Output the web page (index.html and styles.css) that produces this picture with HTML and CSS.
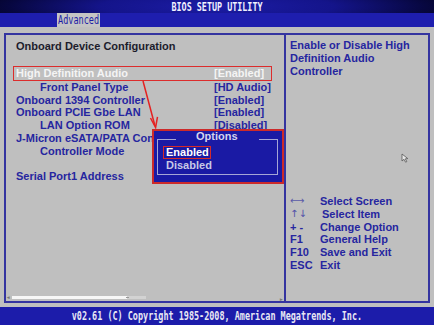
FILE: index.html
```html
<!DOCTYPE html>
<html lang="en">
<head>
<meta charset="UTF-8">
<link rel="stylesheet" href="styles.css">
</head>
<body>
<div class="screen">
  <div class="titlebar"><span class="mono title_text">BIOS SETUP UTILITY</span></div>
  <div class="tabs">
    <div class="tab"><span class="mono">Advanced</span></div>
  </div>

  <div class="main">
    <div class="frame">
      <div class="left">
        <div class="heading">Onboard Device Configuration</div>
        <div class="rows">
          <div class="row selected"><span class="label">High Definition Audio</span><span class="value">[Enabled]</span></div>
          <div class="row"><span class="label sub">Front Panel Type</span><span class="value">[HD Audio]</span></div>
          <div class="row"><span class="label">Onboard 1394 Controller</span><span class="value">[Enabled]</span></div>
          <div class="row"><span class="label">Onboard PCIE Gbe LAN</span><span class="value">[Enabled]</span></div>
          <div class="row"><span class="label sub">LAN Option ROM</span><span class="value">[Disabled]</span></div>
          <div class="row"><span class="label">J-Micron eSATA/PATA Controller</span></div>
          <div class="row"><span class="label sub">Controller Mode</span></div>
          <div class="row blank">&nbsp;</div>
          <div class="row"><span class="label">Serial Port1 Address</span></div>
        </div>
        <div class="scrollbar">
          <span class="scroll_arrow">&#9666;</span>
          <div class="scroll_thumb"><span class="grip"></span></div>
          <span class="scroll_arrow right">&#9656;</span>
        </div>
      </div>

      <div class="right">
        <div class="help">Enable or Disable High<br>Definition Audio<br>Controller</div>
        <div class="keys">
          <span class="key arrows">&#10231;</span><span class="desc">Select Screen</span>
          <span class="key updown">&#8593;&#8595;</span><span class="desc shifted">Select Item</span>
          <span class="key">+ -</span><span class="desc">Change Option</span>
          <span class="key">F1</span><span class="desc">General Help</span>
          <span class="key">F10</span><span class="desc">Save and Exit</span>
          <span class="key">ESC</span><span class="desc">Exit</span>
        </div>
      </div>
    </div>
  </div>

  <div class="footer"><span class="mono">v02.61 (C) Copyright 1985-2008, American Megatrends, Inc.</span></div>

  <!-- overlays -->
  <div class="popup">
    <div class="options_title">Options</div>
    <div class="options_body">
      <div class="option current">Enabled</div>
      <div class="option">Disabled</div>
    </div>
  </div>

  <svg class="arrow" width="434" height="325" viewBox="0 0 434 325">
    <line x1="143" y1="81" x2="155" y2="126" stroke="#e42222" stroke-width="1.5"/>
    <path d="M150.5 118 L155.6 127.5 L157.5 116.8" fill="none" stroke="#e42222" stroke-width="1.5"/>
  </svg>

  <svg class="cursor" width="8" height="10" viewBox="0 0 8 10">
    <path d="M1 1 L1 8 L3 6.3 L4.6 9.2 L5.8 8.6 L4.3 5.8 L6.8 5.6 Z" fill="#e8e8e8" stroke="#555" stroke-width="0.8"/>
  </svg>
</div>
</body>
</html>
```

FILE: styles.css
```css
body {
  margin: 0;
  background: #bebebe;
}

.screen {
  position: relative;
  width: 434px;
  height: 325px;
  overflow: hidden;
  display: flex;
  flex-direction: column;
  font-family: "Liberation Sans", Arial, sans-serif;
  font-weight: bold;
  font-size: 11px;
  color: #2626a0;
}

/* bitmap-ish bios font */
.mono {
  display: inline-block;
  font-family: "DejaVu Sans Mono", monospace;
  font-size: 12px;
  transform: scaleX(0.7);
  white-space: nowrap;
}

.titlebar {
  height: 13px;
  line-height: 14px;
  text-align: center;
  color: #f0f0ff;
  background: radial-gradient(ellipse 60% 220% at 50% 50%, #1c1ca6 0%, #14148a 45%, #070740 80%, #03031c 100%);
}

.title_text {
  font-weight: bold;
}

.tabs {
  height: 14px;
  background: #1e1eae;
  padding-left: 57px;
}

.tab {
  width: 43px;
  height: 14px;
  line-height: 14px;
  background: #c4c4c4;
  color: #1e1ea6;
}

.tab .mono {
  font-weight: normal;
  margin-left: 1px;
  transform: scaleX(0.71);
  transform-origin: left center;
}

.main {
  height: 282px;
  box-sizing: border-box;
  padding: 6px 4px 4px 4px;
  background: #bfbfbf;
}

.frame {
  height: 100%;
  box-sizing: border-box;
  border: 2px solid #3434a0;
  display: flex;
}

.left {
  width: 278px;
  border-right: 2px solid #3434a0;
  display: flex;
  flex-direction: column;
}

.heading {
  padding: 5px 0 0 10px;
  line-height: 13px;
  color: #1c1c2c;
}

.rows {
  margin-top: 13px;
}

.row {
  display: flex;
  margin-left: 7px;
  width: 255px;
  padding-left: 2px;
  border-left: 1px solid transparent;
  border-right: 1px solid transparent;
  line-height: 12.7px;
  white-space: nowrap;
}

.row.selected {
  border: 1px solid #dc2c2c;
  line-height: 13px;
  color: #f4f4f4;
}

.label {
  width: 198px;
}

.label.sub {
  padding-left: 24px;
  box-sizing: border-box;
}

.scrollbar {
  margin-top: auto;
  margin-bottom: 2px;
  height: 4px;
  display: flex;
  align-items: center;
  padding: 0 1px;
  font-size: 5px;
  color: #777;
}

.scroll_arrow {
  width: 5px;
  line-height: 4px;
}

.scroll_arrow.right {
  text-align: right;
}

.scroll_thumb {
  flex: 1;
  height: 3px;
  background: linear-gradient(to right, #f6f6f6 0%, #f6f6f6 86%, #d2d2d2 86%, #d2d2d2 100%);
  position: relative;
}

.grip {
  position: absolute;
  left: 114px;
  top: 1px;
  width: 3px;
  height: 1px;
  background: #999;
}

.right {
  flex: 1;
  padding: 4px 0 0 4px;
}

.help {
  line-height: 13px;
}

.keys {
  margin-top: 117px;
  display: grid;
  grid-template-columns: 30px auto;
  line-height: 12.8px;
}

.key.arrows {
  font-family: "DejaVu Sans", sans-serif;
  font-weight: normal;
  font-size: 10px;
  color: #5a5aa8;
}

.key.updown {
  font-family: "DejaVu Sans", sans-serif;
  font-weight: normal;
  font-size: 10px;
  color: #5050a8;
}

.desc.shifted {
  padding-left: 2px;
}

.footer {
  flex: 1;
  background: #1c1caa;
  color: #e8e8f4;
  text-align: center;
  line-height: 18px;
}

.footer .mono {
  transform: scaleX(0.705);
}

.popup {
  position: absolute;
  left: 152px;
  top: 129px;
  width: 132px;
  height: 55px;
  box-sizing: border-box;
  border: 2px solid #cc2a2a;
  background: #1a1aa4;
  padding: 0 4px 0 3px;
}

.options_title {
  display: flex;
  line-height: 11px;
  color: #d4d4ee;
}

.options_title::before,
.options_title::after {
  content: "";
  width: 18px;
  height: 3px;
  margin-top: 8px;
  border-top: 1px solid #a6a6d6;
  border-left: 1px solid #a6a6d6;
}

.options_title::after {
  border-left: none;
  border-right: 1px solid #a6a6d6;
}

.options_title::before {
  margin-right: 20px;
}

.options_title::after {
  margin-left: auto;
}

.options_body {
  border: 1px solid #a6a6d6;
  border-top: none;
  height: 32px;
  box-sizing: border-box;
  padding-top: 3px;
}

.option {
  margin-left: 5px;
  padding-left: 2px;
  border: 1px solid transparent;
  line-height: 11px;
  color: #c8c8e6;
}

.option.current {
  width: 44px;
  border-color: #d42a2a;
  line-height: 11.3px;
  color: #ffffff;
}

.arrow {
  position: absolute;
  left: 0;
  top: 0;
  pointer-events: none;
}

.cursor {
  position: absolute;
  left: 401px;
  top: 153px;
}
```
